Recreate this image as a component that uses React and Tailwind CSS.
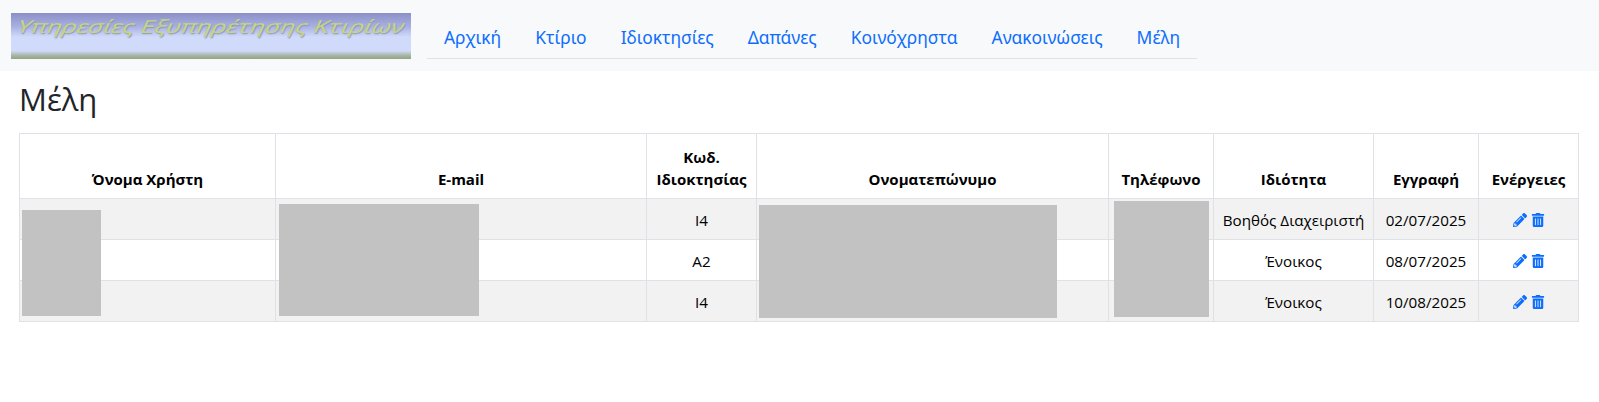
import { FaPencilAlt, FaTrashAlt } from "react-icons/fa"

const tabs = ["Αρχική", "Κτίριο", "Ιδιοκτησίες", "Δαπάνες", "Κοινόχρηστα", "Ανακοινώσεις", "Μέλη"]

const rows = [
  { code: "I4", role: "Βοηθός Διαχειριστή", date: "02/07/2025" },
  { code: "A2", role: "Ένοικος", date: "08/07/2025" },
  { code: "I4", role: "Ένοικος", date: "10/08/2025" },
]

const cell = "border border-[#dee2e6] px-2 pt-[2px] align-middle text-center text-[15.2px]"
const head = "border border-[#dee2e6] px-2 pb-[8px] pt-2 align-bottom text-center font-bold leading-[22px]"

function Logo() {
  return (
    <div className="h-[46px] w-[400px] shrink-0 overflow-hidden bg-[linear-gradient(180deg,#8b8fc8_0%,#a9b1e2_30%,#d0dafb_52%,#d0dafb_82%,#a9b6a8_92%,#8fa67e_100%)] pl-[7px]">
      <div className="w-max origin-left -skew-x-[18deg] scale-x-[1.37] whitespace-nowrap font-['Noto_Sans'] text-[18px] leading-[26px] text-[#c3d682] [text-shadow:1px_1px_1px_#8d93b8]">
        Υπηρεσίες Εξυπηρέτησης Κτιρίων
      </div>
    </div>
  )
}

export default function App() {
  return (
    <div className="min-h-[402px] bg-white font-['Open_Sans',sans-serif] text-[15px] text-black">
      <header className="flex h-[71px] items-start bg-[#f8f9fa] pl-[11px] pt-[13px]">
        <Logo />
        <nav className="ml-4 flex h-[46px] items-end border-b border-[#dee2e6] pb-[5px] font-['Noto_Sans',sans-serif] text-[17.4px] text-[#0d6efd]">
          {tabs.map((t) => (
            <a key={t} className="px-[17px] leading-[32px]">
              {t}
            </a>
          ))}
        </nav>
      </header>

      <main className="px-[19px]">
        <h1 className="mb-[12px] mt-[6px] text-[31px] leading-[44px] text-[#212529]">Μέλη</h1>
        <div className="relative">
          <table className="w-[1559px] table-fixed border-collapse">
            <colgroup>
              <col className="w-[256px]" />
              <col className="w-[371px]" />
              <col className="w-[110px]" />
              <col className="w-[352px]" />
              <col className="w-[105px]" />
              <col className="w-[160px]" />
              <col className="w-[105px]" />
              <col className="w-[100px]" />
            </colgroup>
            <thead>
              <tr className="h-[65px]">
                <th className={head}>Όνομα Χρήστη</th>
                <th className={head}>E-mail</th>
                <th className={head}>
                  Κωδ.
                  <br />
                  Ιδιοκτησίας
                </th>
                <th className={head}>Ονοματεπώνυμο</th>
                <th className={head}>Τηλέφωνο</th>
                <th className={head}>Ιδιότητα</th>
                <th className={head}>Εγγραφή</th>
                <th className={head}>Ενέργειες</th>
              </tr>
            </thead>
            <tbody>
              {rows.map((r, i) => (
                <tr key={i} className={i % 2 === 0 ? "h-[41px] bg-[#f2f2f2]" : "h-[41px] bg-white"}>
                  <td className={cell}></td>
                  <td className={cell}></td>
                  <td className={cell}>{r.code}</td>
                  <td className={cell}></td>
                  <td className={cell}></td>
                  <td className={cell}>{r.role}</td>
                  <td className={cell}>{r.date}</td>
                  <td className={cell}>
                    <div className="flex items-center justify-center gap-[4px] text-[#0d6efd]">
                      <FaPencilAlt className="size-[14px]" />
                      <FaTrashAlt className="size-[14px]" />
                    </div>
                  </td>
                </tr>
              ))}
            </tbody>
          </table>
          {/* redacted blocks sitting over the table */}
          <div className="absolute left-[3px] top-[77px] h-[106px] w-[79px] bg-[#c2c2c2]" />
          <div className="absolute left-[260px] top-[71px] h-[112px] w-[200px] bg-[#c2c2c2]" />
          <div className="absolute left-[740px] top-[72px] h-[113px] w-[298px] bg-[#c2c2c2]" />
          <div className="absolute left-[1095px] top-[68px] h-[116px] w-[95px] bg-[#c2c2c2]" />
        </div>
      </main>
    </div>
  )
}
